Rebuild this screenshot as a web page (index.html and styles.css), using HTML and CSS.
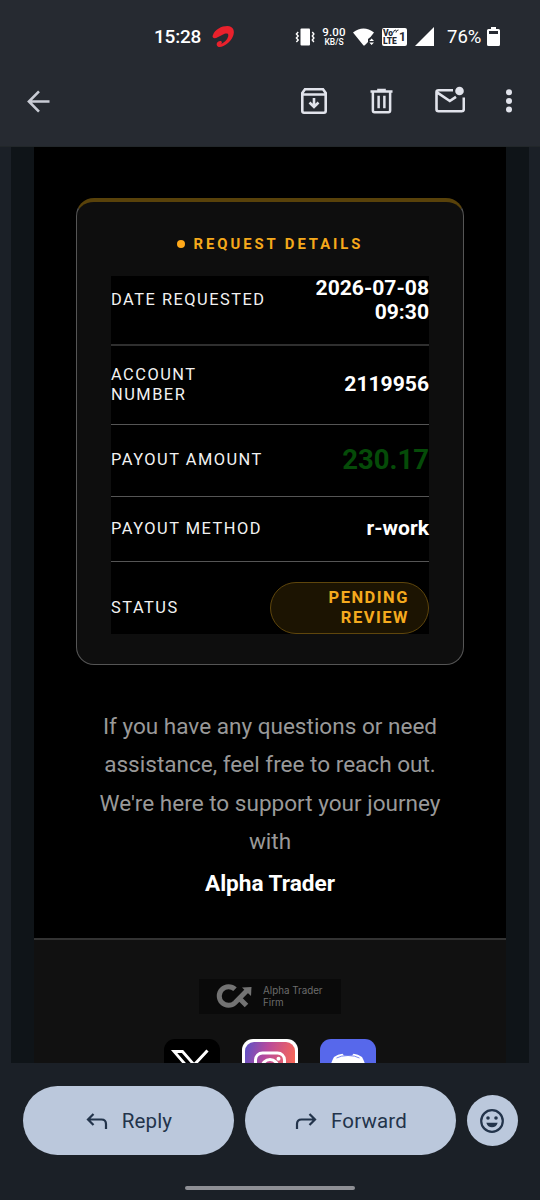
FILE: index.html
```html
<!DOCTYPE html>
<html lang="en">
<head>
<meta charset="utf-8">
<title>Request details</title>
<link rel="stylesheet" href="styles.css">
</head>
<body>
<div class="screen">
  <header class="top">
    <div class="status">
      <span class="clock">15:28</span>
      <svg class="carrier" viewBox="0 0 24 24"><path d="M1 10.500C3 4.500 10 1 16 1c6.500 0 8 5.500 6 10.500-3 7-9 11-14 11.500-3 0-4-3-2.300-5 2-2 5-1.500 4.600.3 0 1-1 1.700-1 1.700 4.500-2 8-6.500 7.700-9.500-.3-2.500-3.500-1.500-6-.3-3.500 1.800-6 3.600-8.500 3.600-2 0-2.300-1.800-1.500-3.300z" fill="#e9212c"/></svg>
      <svg class="vibrate" viewBox="0 0 20 18"><rect x="5.500" y=".5" width="9.500" height="17" rx="1" fill="#fff"/><path d="M3.200 4 1.400 6l1.800 2-1.800 2 1.800 2-1.800 2M17.300 4l1.600 2-1.600 2 1.600 2-1.600 2 1.600 2" fill="none" stroke="#fff" stroke-width="1.400"/></svg>
      <span class="speed"><b>9.00</b><i>KB/S</i></span>
      <svg class="wifi" viewBox="0 0 22 18"><path d="M0 4.500Q10.500-3.500 21 4.500L17.500 9 15 11v3l-3.500 3.500h-1z" fill="#fff"/><path d="M16.300 13 18.600 10.500 21 13zM16.300 14.500 18.600 17 21 14.500z" fill="#fff"/></svg>
      <span class="volte"><span class="vo"><b>Vo<svg viewBox="0 0 6 4"><path d="M.5 3.500q0-2.500 2.500-2.500M3 3.500q0-2.500 2.500-2.500" fill="none" stroke="#262a31"/></svg></b><b>LTE</b></span><span class="sim">1</span></span>
      <svg class="signal" viewBox="0 0 19 19"><path d="M0 19 19 0v19z" fill="#fff"/></svg>
      <span class="percent">76%</span>
      <svg class="battery" viewBox="0 0 13 19"><path d="M4 0h5v2h2.500Q13 2 13 3.500v14Q13 19 11.500 19h-10Q0 19 0 17.500v-14Q0 2 1.500 2H4z" fill="#fff"/><path d="M2 4h9v3H2z" fill="#262a31"/></svg>
    </div>
    <nav class="toolbar">
      <svg class="back" viewBox="0 0 24 24"><path d="M23.500 12H2M12.500 1.500 2 12l10.500 10.500" fill="none" stroke="#c9ccd5" stroke-width="2.700"/></svg>
      <span class="grow"></span>
      <svg class="archive" viewBox="0 0 26 26"><path d="M1.300 5 4 1.300h18L24.700 5v18q0 1.700-1.700 1.700H3q-1.700 0-1.700-1.700zM1.300 6.500h23.400M13 10v9M8.500 14.500 13 19l4.500-4.500" fill="none" stroke="#e1e3eb" stroke-width="2.600"/></svg>
      <svg class="trash" viewBox="0 0 24 26"><path d="M.5 3h23M7.500 1.500h9M3 3v20q0 1.700 1.700 1.700h14.600q1.700 0 1.700-1.700V3M9 7.500v13M15 7.500v13" fill="none" stroke="#e1e3eb" stroke-width="2.600"/></svg>
      <svg class="unread" viewBox="0 0 30 27"><path d="M18 4.300H3.500q-2 0-2 2v17q0 2 2 2h23.300q2 0 2-2V11.500M2 6.300 14.800 15 21 10.800" fill="none" stroke="#e1e3eb" stroke-width="2.600"/><circle cx="24.500" cy="5" r="4.300" fill="#e1e3eb"/></svg>
      <svg class="more" viewBox="0 0 6 24"><g fill="#e1e3eb"><circle cx="3" cy="3.300" r="3"/><circle cx="3" cy="12" r="3"/><circle cx="3" cy="20.500" r="3"/></g></svg>
    </nav>
  </header>
  <main class="viewport">
    <div class="mail">
      <div class="body">
        <section class="card">
          <h2><span class="dot"></span>REQUEST DETAILS</h2>
          <div class="table">
            <div class="row date"><span>DATE REQUESTED</span><strong>2026-07-08<br>09:30</strong></div>
            <div class="row account"><span>ACCOUNT<br>NUMBER</span><strong>2119956</strong></div>
            <div class="row amount"><span>PAYOUT AMOUNT</span><strong>230.17</strong></div>
            <div class="row method"><span>PAYOUT METHOD</span><strong>r-work</strong></div>
            <div class="row state"><span>STATUS</span><span class="pill">PENDING<br>REVIEW</span></div>
          </div>
        </section>
        <p class="help">If you have any questions or need<br>assistance, feel free to reach out.<br>We're here to support your journey<br>with</p>
        <p class="firm">Alpha Trader</p>
        <footer class="foot">
          <div class="brand">
            <svg viewBox="0 0 36 24"><path d="M19 5.300A9.300 9.300 0 1 0 19 18.700L31.500 6M23 14l7.500 7.500" fill="none" stroke="#737373" stroke-width="5"/><path d="M26 3.500 35.500 3l-.5 9z" fill="#737373"/></svg>
            <span>Alpha Trader<br>Firm</span>
          </div>
          <div class="social">
            <svg viewBox="0 0 56 56"><rect width="56" height="56" rx="11" fill="#000"/><path d="M10 12.500h8.500L46 44H37.500z" fill="none" stroke="#fff" stroke-width="2.800"/><path d="M43.500 11.500 30 26M25 31 13 44" stroke="#fff" stroke-width="3"/></svg>
            <svg viewBox="0 0 56 56"><defs><linearGradient id="ig" x1="0" y1="0" x2="1" y2=".25"><stop offset="0" stop-color="#5952c8"/><stop offset=".45" stop-color="#b84a9c"/><stop offset="1" stop-color="#f5665a"/></linearGradient></defs><rect width="56" height="56" rx="11" fill="#fff"/><rect x="3" y="3" width="50" height="50" rx="9" fill="url(#ig)"/><rect x="13.500" y="14" width="29" height="29" rx="7" fill="none" stroke="#fff" stroke-width="3"/><circle cx="28" cy="28.500" r="8" fill="none" stroke="#fff" stroke-width="3"/><circle cx="36.500" cy="19.800" r="2" fill="#fff"/></svg>
            <svg viewBox="0 0 56 56"><rect width="56" height="56" rx="11" fill="#5768eb"/><path d="M14 18q4-3 8.500-3.200l1.500 1.700h8l1.500-1.700Q38 15 42 18q5 9 5 20l-10 5-3-5H22l-3 5-10-5q0-11 5-20z" fill="#fff"/><path d="M16.500 19q4.500-2.500 11.500-2.500t11.500 2.500" fill="none" stroke="#5768eb" stroke-width=".8"/></svg>
          </div>
        </footer>
      </div>
    </div>
  </main>
  <div class="actions">
    <button class="btn"><svg viewBox="0 0 22 18"><path d="M7.500 2 2 7.500 7.500 13M2 7.500h13.500Q20 7.500 20 12v5" fill="none" stroke="#23344b" stroke-width="2.200"/></svg>Reply</button>
    <button class="btn"><svg viewBox="0 0 22 18"><path d="M14.500 2 20 7.500 14.500 13M20 7.500H6.500Q2 7.500 2 12v5" fill="none" stroke="#23344b" stroke-width="2.200"/></svg>Forward</button>
    <button class="emoji" aria-label="React"><svg viewBox="0 0 24 24"><circle cx="12" cy="12" r="10.800" fill="none" stroke="#23344b" stroke-width="2.200"/><circle cx="8" cy="9" r="1.800" fill="#23344b"/><circle cx="16" cy="9" r="1.800" fill="#23344b"/><path d="M6.300 13.700h11.400q-1.500 4.600-5.700 4.600t-5.700-4.600z" fill="#23344b"/></svg></button>
  </div>
  <div class="home"></div>
</div>
</body>
</html>
```

FILE: styles.css
```css
* { box-sizing: border-box; margin: 0; }
body { background: #1b2027; font-family: Roboto, sans-serif; color: #fff; }
svg { display: block; flex: none; }
.screen { width: 540px; height: 1200px; overflow: hidden; display: flex; flex-direction: column; }

.top { height: 147px; flex: none; background: #262a31; border-bottom: 1px solid #22272a; }
.status { height: 73px; padding-left: 154px; display: flex; align-items: center; }
.clock { width: 47px; font-size: 19px; font-weight: 500; letter-spacing: -.2px; }
.carrier { width: 23px; height: 23px; margin-left: 11px; }
.vibrate { width: 20px; height: 18px; margin-left: 60px; }
.speed { width: 26px; margin-left: 6px; display: flex; flex-direction: column; align-items: center; }
.speed b { font-size: 11.500px; line-height: 11px; font-weight: 500; letter-spacing: .2px; }
.speed i { font-size: 8.500px; line-height: 9px; font-style: normal; font-weight: 500; }
.wifi { width: 22px; height: 18px; margin-left: 6px; }
.volte { width: 25px; height: 18px; margin-left: 7px; background: #fff; border-radius: 2px; color: #262a31; display: flex; align-items: center; justify-content: space-between; padding: 0 2px 0 1px; }
.vo { display: flex; flex-direction: column; font-size: 8.500px; line-height: 8px; letter-spacing: -.1px; }
.vo b { display: flex; font-weight: 900; white-space: nowrap; height: 8px; }
.vo svg { width: 6px; height: 4px; }
.sim { font-size: 12px; font-weight: 700; }
.signal { width: 19px; height: 19px; margin-left: 8px; }
.percent { width: 35px; margin-left: 13px; font-size: 18.500px; white-space: nowrap; }
.battery { width: 13px; height: 19px; margin-left: 5px; }

.toolbar { height: 56px; display: flex; align-items: center; padding: 0 28px 0 27px; }
.grow { flex: 1; }
.back { width: 23px; height: 23px; }
.archive { width: 26px; height: 26px; }
.trash { width: 23px; height: 26px; margin-left: 43px; }
.unread { width: 30px; height: 27px; margin: 0 0 3px 42px; }
.more { width: 6px; height: 24px; margin-left: 41px; }

.viewport { height: 916px; flex: none; overflow: hidden; padding: 0 11px; background: #1b2027; }
.mail { background: #0f1418; padding: 0 23px; height: 916px; }
.body { background: #000; height: 916px; padding-top: 51px; }
.card { width: 388px; height: 467px; margin: 0 auto; padding: 32px 34px 0; background: #0e0e0e; border: 1px solid #555; border-top: 4px solid #59420a; border-radius: 18px; }
.card h2 { height: 20px; display: flex; align-items: center; justify-content: center; font-size: 14.800px; line-height: 20px; font-weight: 700; letter-spacing: 2.950px; color: #f5a91b; white-space: nowrap; }
.dot { width: 8px; height: 8px; border-radius: 50%; background: #ffa91a; margin-right: 9px; }
.table { margin-top: 22px; background: #000; }
.row { display: flex; justify-content: space-between; align-items: center; border-bottom: 1px solid #555; font-size: 16.400px; line-height: 19.500px; letter-spacing: 1.500px; color: #f2f2f2; white-space: nowrap; }
.row strong { font-size: 21.100px; line-height: 24.500px; font-weight: 700; letter-spacing: 0; text-align: right; color: #fff; }
.date { height: 70px; padding-bottom: 20px; border-bottom: 2px solid #2f2f2f; }
.account { height: 79px; padding-bottom: 1px; }
.amount { height: 72px; padding-bottom: 1px; }
.amount strong { font-size: 27.500px; color: #054b08; }
.method { height: 65px; padding-bottom: 1px; }
.state { height: 72px; padding-top: 20px; border: 0; }
.pill { width: 159px; height: 52px; padding: 5px 19px 0; border: 1px solid #5f460c; border-radius: 26px; background: #1c1402; color: #f5aa1e; font-size: 16.500px; font-weight: 700; text-align: right; }
.help { margin-top: 43px; text-align: center; font-size: 22.550px; line-height: 38.400px; color: #999; white-space: nowrap; }
.firm { height: 76px; text-align: center; font-size: 22.600px; line-height: 43px; font-weight: 700; }
.foot { height: 126px; background: #111; border-top: 2px solid #333; padding-top: 39px; display: flex; flex-direction: column; align-items: center; }
.brand { width: 142px; height: 35px; flex: none; background: #0a0a0a; display: flex; align-items: center; padding-left: 17px; }
.brand svg { width: 36px; height: 24px; }
.brand span { margin: 1px 0 0 11px; font-family: Inter, sans-serif; font-size: 9.800px; line-height: 11.800px; color: #6c6c6c; white-space: nowrap; }
.social { display: flex; gap: 22px; margin-top: 25px; }
.social svg { width: 56px; height: 56px; }

.actions { height: 115px; flex: none; display: flex; align-items: center; gap: 11px; padding: 0 22px 0 22.500px; }
.btn { width: 211px; height: 69px; flex: none; border: 0; border-radius: 35px; background: #bbc8dc; color: #23344b; font: 400 20.500px Roboto, sans-serif; letter-spacing: .15px; padding: 0 0 0 2px; display: flex; align-items: center; justify-content: center; gap: 14px; }
.btn svg { width: 22px; height: 18px; }
.emoji { width: 51px; height: 51px; flex: none; border: 0; padding: 0; border-radius: 50%; background: #bbc8dc; display: flex; align-items: center; justify-content: center; }
.emoji svg { width: 24px; height: 24px; }
.home { width: 170px; height: 4px; margin: 8px 0 0 185px; border-radius: 2px; background: #8e8f95; }
```
